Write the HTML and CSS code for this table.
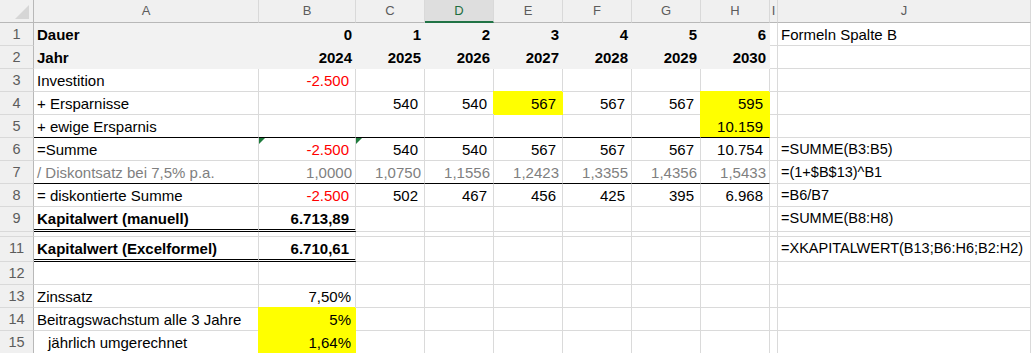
FILE: index.html
```html
<!DOCTYPE html>
<html lang="de">
<head>
    <meta charset="UTF-8">
    <meta name="viewport" content="width=device-width, initial-scale=1.0">
    <title>Kapitalwert</title>
    <link rel="stylesheet" href="styles.css">
</head>
<body>
    <div class="sheet">
        <!-- column letters -->
        <div class="row head">
            <div class="corner">
                <svg width="16" height="16" viewBox="0 0 16 16"><polygon points="1,15 15,15 15,1" fill="#d6d6d6"/></svg>
            </div>
            <div>A</div><div>B</div><div>C</div><div class="sel">D</div><div>E</div>
            <div>F</div><div>G</div><div>H</div><div>I</div><div>J</div>
        </div>

        <div class="row">
            <div class="rh">1</div>
            <div class="fill b">Dauer</div>
            <div class="fill b n">0</div>
            <div class="fill b n">1</div>
            <div class="fill b n">2</div>
            <div class="fill b n">3</div>
            <div class="fill b n">4</div>
            <div class="fill b n">5</div>
            <div class="fill b n">6</div>
            <div></div>
            <div>Formeln Spalte B</div>
        </div>

        <div class="row">
            <div class="rh">2</div>
            <div class="fill b">Jahr</div>
            <div class="fill b n">2024</div>
            <div class="fill b n">2025</div>
            <div class="fill b n">2026</div>
            <div class="fill b n">2027</div>
            <div class="fill b n">2028</div>
            <div class="fill b n">2029</div>
            <div class="fill b n">2030</div>
            <div></div>
            <div></div>
        </div>

        <div class="row">
            <div class="rh">3</div>
            <div>Investition</div>
            <div class="n sp red">-2.500</div>
            <div></div><div></div><div></div><div></div><div></div><div></div>
            <div></div>
            <div></div>
        </div>

        <div class="row">
            <div class="rh">4</div>
            <div>+ Ersparnisse</div>
            <div></div>
            <div class="n sp">540</div>
            <div class="n sp">540</div>
            <div class="n sp yel">567</div>
            <div class="n sp">567</div>
            <div class="n sp">567</div>
            <div class="n sp yel">595</div>
            <div></div>
            <div></div>
        </div>

        <div class="row">
            <div class="rh">5</div>
            <div class="line">+ ewige Ersparnis</div>
            <div class="line"></div>
            <div class="line"></div>
            <div class="line"></div>
            <div class="line"></div>
            <div class="line"></div>
            <div class="line"></div>
            <div class="n sp yel line">10.159</div>
            <div></div>
            <div></div>
        </div>

        <div class="row">
            <div class="rh">6</div>
            <div>=Summe</div>
            <div class="n sp red warn">-2.500</div>
            <div class="n sp warn">540</div>
            <div class="n sp">540</div>
            <div class="n sp">567</div>
            <div class="n sp">567</div>
            <div class="n sp">567</div>
            <div class="n sp">10.754</div>
            <div></div>
            <div class="f">=SUMME(B3:B5)</div>
        </div>

        <div class="row">
            <div class="rh">7</div>
            <div class="gray line">/ Diskontsatz bei 7,5% p.a.</div>
            <div class="n gray line">1,0000</div>
            <div class="n gray line">1,0750</div>
            <div class="n gray line">1,1556</div>
            <div class="n gray line">1,2423</div>
            <div class="n gray line">1,3355</div>
            <div class="n gray line">1,4356</div>
            <div class="n gray line">1,5433</div>
            <div></div>
            <div class="f">=(1+$B$13)^B1</div>
        </div>

        <div class="row">
            <div class="rh">8</div>
            <div>= diskontierte Summe</div>
            <div class="n sp red">-2.500</div>
            <div class="n sp">502</div>
            <div class="n sp">467</div>
            <div class="n sp">456</div>
            <div class="n sp">425</div>
            <div class="n sp">395</div>
            <div class="n sp">6.968</div>
            <div></div>
            <div class="f">=B6/B7</div>
        </div>

        <div class="row tall">
            <div class="rh">9</div>
            <div class="b dbl">Kapitalwert (manuell)</div>
            <div class="b n sp dbl">6.713,89</div>
            <div></div><div></div><div></div><div></div><div></div><div></div>
            <div></div>
            <div class="f">=SUMME(B8:H8)</div>
        </div>

        <!-- row 10 is collapsed -->
        <div class="row thin">
            <div class="rh"></div>
            <div></div><div></div><div></div><div></div><div></div><div></div>
            <div></div><div></div><div></div><div></div>
        </div>

        <div class="row tall">
            <div class="rh">11</div>
            <div class="b dbl">Kapitalwert (Excelformel)</div>
            <div class="b n sp dbl">6.710,61</div>
            <div></div><div></div><div></div><div></div><div></div><div></div>
            <div></div>
            <div class="f">=XKAPITALWERT(B13;B6:H6;B2:H2)</div>
        </div>

        <div class="row">
            <div class="rh">12</div>
            <div></div><div></div><div></div><div></div><div></div><div></div>
            <div></div><div></div><div></div><div></div>
        </div>

        <div class="row">
            <div class="rh">13</div>
            <div>Zinssatz</div>
            <div class="n pc">7,50%</div>
            <div></div><div></div><div></div><div></div><div></div><div></div>
            <div></div>
            <div></div>
        </div>

        <div class="row">
            <div class="rh">14</div>
            <div>Beitragswachstum alle 3 Jahre</div>
            <div class="n pc yel">5%</div>
            <div></div><div></div><div></div><div></div><div></div><div></div>
            <div></div>
            <div></div>
        </div>

        <div class="row">
            <div class="rh">15</div>
            <div class="indent">jährlich umgerechnet</div>
            <div class="n pc yel">1,64%</div>
            <div></div><div></div><div></div><div></div><div></div><div></div>
            <div></div>
            <div></div>
        </div>
    </div>
</body>
</html>
```

FILE: styles.css
```css
body {
    margin: 0;
    font-family: "Liberation Sans", Arial, sans-serif;
    font-size: 15px;
    color: #000;
    background-color: #fff;
    overflow: hidden;
}

.sheet {
    width: 1031px;
}

.row {
    display: grid;
    grid-template-columns: 34px 225px 97px repeat(6, 69px) 8px 253px;
    grid-template-rows: minmax(0, 1fr);
    height: 23px;
}

.row.tall {
    height: 25px;
}

.row.thin {
    height: 5px;
}

.row > div {
    position: relative;
    box-sizing: border-box;
    min-width: 0;
    display: flex;
    align-items: flex-end;
    padding: 0 3px 2px 3px;
    line-height: 17px;
    white-space: nowrap;
    border-right: 1px solid #dadada;
    border-bottom: 1px solid #dadada;
}

.row.tall > div {
    padding-bottom: 4px;
}

/* column letters */
.head > div {
    align-items: center;
    justify-content: center;
    padding: 0 0 1px 0;
    background-color: #f0f0f0;
    color: #5c5c5c;
    font-size: 13px;
    border-right-color: #d9d9d9;
    border-bottom-color: #b8b8b8;
}

.head > .corner {
    align-items: flex-end;
    justify-content: flex-end;
    padding: 0 3px 2px 0;
    border-right-color: #b8b8b8;
}

.head > .corner svg {
    display: block;
}

.head > .sel {
    background-color: #dedede;
    color: #1e6f41;
    border-bottom: 2px solid #217346;
}

/* row numbers */
.row > .rh {
    justify-content: center;
    padding: 0 0 2px 0;
    background-color: #f0f0f0;
    color: #5c5c5c;
    font-size: 14.5px;
    border-right-color: #b8b8b8;
    border-bottom-color: #d9d9d9;
}

.row.tall > .rh {
    padding-bottom: 4px;
}

.n {
    justify-content: flex-end;
}

.row > .sp {
    padding-right: 6px;
}

.row > .pc {
    padding-right: 4px;
}

.row > .indent {
    padding-left: 14px;
}

.b {
    font-weight: bold;
}

.red {
    color: #ff0000;
}

.gray {
    color: #7f7f7f;
}

.f {
    font-size: 14.5px;
}

.row > .fill {
    background-color: #f2f2f2;
    border-color: #f2f2f2;
}

.row > .yel {
    background-color: #ffff00;
    border-right-color: #ffff00;
    border-bottom-color: #ffff00;
    box-shadow: -1px -1px 0 #ffff00;
}

.row > .line {
    border-bottom-color: #000;
}

.row.tall > .dbl {
    border-bottom: 3px double #000;
    padding-bottom: 2px;
}

/* green error marker in the upper left corner */
.warn::before {
    content: "";
    position: absolute;
    top: 0;
    left: 0;
    border-top: 6px solid #1e7b3c;
    border-right: 6px solid transparent;
}
```
